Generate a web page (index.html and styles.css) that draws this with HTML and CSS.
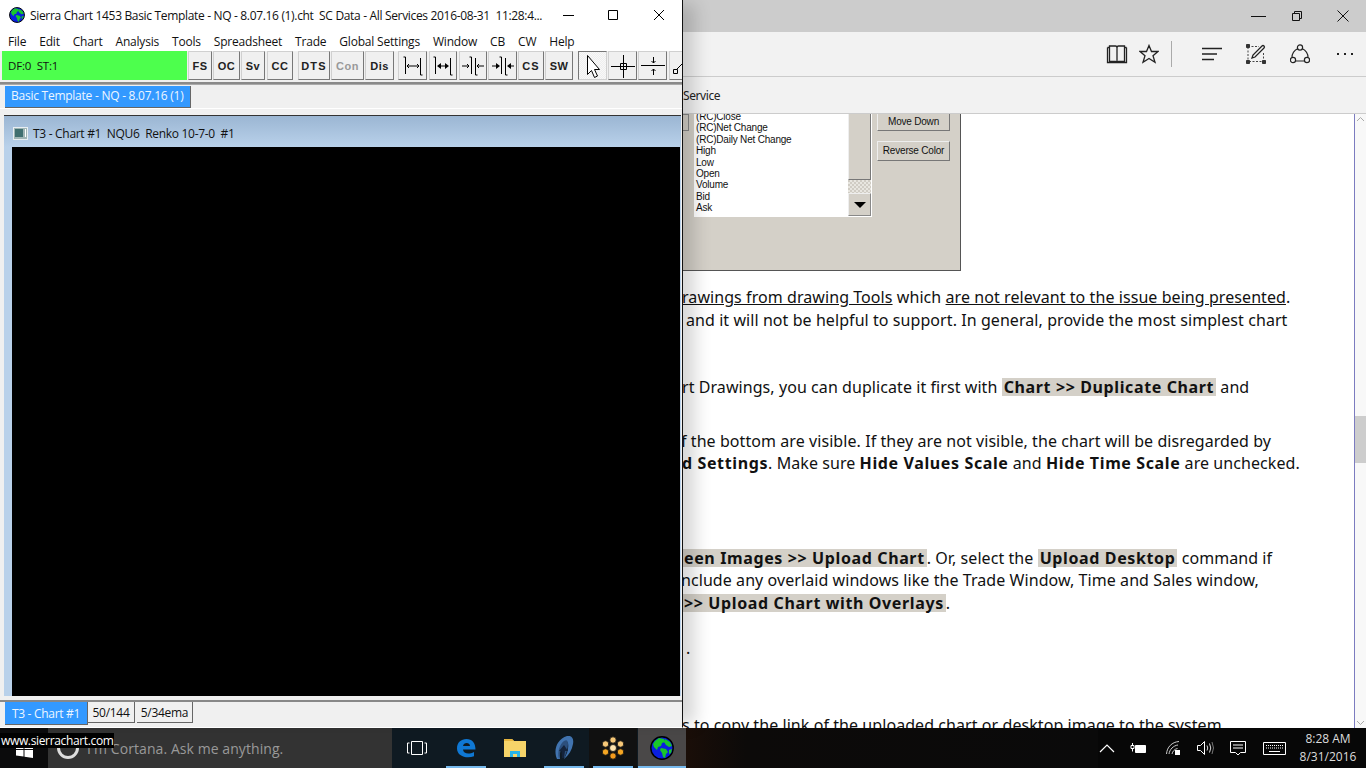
FILE: index.html
```html
<!DOCTYPE html>
<html lang="en">
<head>
<meta charset="utf-8">
<title>Sierra Chart</title>
<link rel="stylesheet" href="styles.css">
</head>
<body>
<svg class="defs" width="0" height="0">
  <symbol id="globe" viewBox="0 0 24 24">
    <circle cx="12" cy="12" r="11.2" fill="#0a1fe0" stroke="#000" stroke-width="1.4"/>
    <path d="M5 5l4-3 5 1 1 3-3 1-1 3-3 1-1 3-3-3-1-3z" fill="#19c72a"/>
    <path d="M15 3l5 3 2 4-3 1-3-2-2-3z" fill="#19c72a"/>
    <path d="M11 12l5 1 2 3-2 2-1 4-2-1-1-4-2-3z" fill="#19c72a"/>
    <path d="M19 14l3-1-1 4-2 1z" fill="#19c72a"/>
  </symbol>
</svg>

<div class="browser">
  <div class="b-title">
    <svg class="wc wc-min" width="16" height="16" viewBox="0 0 16 16"><path d="M1 8.500h15" stroke="#111"/></svg>
    <svg class="wc wc-res" width="16" height="16" viewBox="0 0 16 16"><path d="M3.500 5.500h7v7h-7zM5.500 5.500v-2h7v7h-2" fill="none" stroke="#111"/></svg>
    <svg class="wc wc-close" width="16" height="16" viewBox="0 0 16 16"><path d="M2.500 2.500l11 11M13.500 2.500l-11 11" stroke="#111"/></svg>
  </div>
  <div class="b-tools">
    <svg class="bi bi-book" width="22" height="20" viewBox="0 0 22 20"><path d="M1.500 3.500h2v14h6q1.500 0 1.500 1.500v-15q0-2-1.500-2h-6v1.500M20.500 3.500h-2v14h-6q-1.500 0-1.500 1.500M11 4q0-2 1.500-2h6v1.500M1.500 3.500v15h19v-15" fill="none" stroke="#222" stroke-width="1.300"/></svg>
    <svg class="bi bi-star" width="20" height="20" viewBox="0 0 20 20"><path d="M10 1.500l2.500 6h6.500l-5 4.200 2 6.500-6-3.800-6 3.800 2-6.500-5-4.200h6.500z" fill="none" stroke="#222" stroke-width="1.300"/></svg>
    <span class="bi-sep"></span>
    <svg class="bi bi-hub" width="20" height="14" viewBox="0 0 20 14"><path d="M0 1.500h20M0 7h15M0 12.500h12" stroke="#222" stroke-width="1.300"/></svg>
    <svg class="bi bi-note" width="20" height="20" viewBox="0 0 20 20"><path d="M2 2.500h11M17.500 9v9M2 3v15M3 17.500h14" stroke="#444" stroke-dasharray="2 1.500" fill="none"/><path d="M0.500 0.500h3v3h-3zM0.500 16.500h3v3h-3zM16.500 16.500h3v3h-3z" fill="#333" stroke="#333"/><path d="M6 14l1-3 9-9q1-1 2 0t0 2l-9 9z" fill="none" stroke="#222" stroke-width="1.300"/></svg>
    <svg class="bi bi-share" width="20" height="20" viewBox="0 0 20 20"><circle cx="10" cy="3.500" r="2.600" fill="none" stroke="#222" stroke-width="1.200"/><circle cx="3" cy="16" r="2.600" fill="none" stroke="#222" stroke-width="1.200"/><circle cx="17" cy="16" r="2.600" fill="none" stroke="#222" stroke-width="1.200"/><path d="M5.800 17h8.400M2 13.500q0-6 6-9M18 13.500q0-6-6-9" fill="none" stroke="#222" stroke-width="1.200"/></svg>
    <svg class="bi bi-more" width="18" height="4" viewBox="0 0 18 4"><path d="M1 1h2v2H1zM8 1h2v2H8zM15 1h2v2h-2z" fill="#222"/></svg>
  </div>
  <div class="b-fav">Service</div>
  <div class="b-body">
    <div class="page">
      <div class="dlg">
        <div class="dlg-left"><span class="dlg-stub"></span></div>
        <div class="listbox">
          <div class="items">
            <div>(RC)Close</div><div>(RC)Net Change</div><div>(RC)Daily Net Change</div><div>High</div><div>Low</div><div>Open</div><div>Volume</div><div>Bid</div><div>Ask</div>
          </div>
          <div class="lb-scroll">
            <span class="lb-thumb"></span>
            <span class="lb-check"></span>
            <span class="lb-down"><svg width="12" height="6" viewBox="0 0 12 6"><path d="M0 0h12L6 6z" fill="#000"/></svg></span>
          </div>
        </div>
        <div class="dlg-btns">
          <span class="dlg-btn dlg-btn-move">Move Down</span>
          <span class="dlg-btn dlg-btn-rev">Reverse Color</span>
        </div>
      </div>
      <p class="p1"><span class="i1"><u>rawings from drawing Tools</u> which <u>are not relevant to the issue being presented</u>.</span><br><span class="i2">and it will not be helpful to support. In general, provide the most simplest chart</span></p>
      <p class="p2"><span class="i1">rt Drawings, you can duplicate it first with <b class="hl">Chart &gt;&gt; Duplicate Chart</b> and</span></p>
      <p class="p3"><span class="i3">f the bottom are visible. If they are not visible, the chart will be disregarded by</span><br><span class="i1"><b>d Settings</b>. Make sure <b>Hide Values Scale</b> and <b>Hide Time Scale</b> are unchecked.</span></p>
      <p class="p4"><span class="i1"><b class="hl">een Images &gt;&gt; Upload Chart</b>. Or, select the <b class="hl">Upload Desktop</b> command if</span><br><span class="i3">nclude any overlaid windows like the Trade Window, Time and Sales window,</span><br><span class="i1"><b class="hl">&gt;&gt; Upload Chart with Overlays</b>.</span></p>
      <p class="p5"><span class="i2">.</span></p>
      <p class="p6"><span class="i1">s to copy the link of the uploaded chart or desktop image to the system</span></p>
    </div>
    <div class="vscroll">
      <svg class="vs-arrow" width="9" height="6" viewBox="0 0 9 6"><path d="M1 5l3.500-3.500L8 5" fill="none" stroke="#aaa"/></svg>
      <span class="vs-thumb"></span>
      <svg class="vs-arrow" width="9" height="6" viewBox="0 0 9 6"><path d="M1 1l3.500 3.500L8 1" fill="none" stroke="#aaa"/></svg>
    </div>
  </div>
</div>

<div class="taskbar">
  <div class="start">
    <svg width="17" height="17" viewBox="0 0 17 17"><path d="M0 2.500l7.500-1v6.500H0zM8.500 1.300L17 0v8H8.500zM0 9h7.500v6.500L0 14.500zM8.500 9H17v8l-8.500-1.200z" fill="#fff"/></svg>
  </div>
  <div class="cortana">
    <span class="c-ring"></span>
    <span class="c-text">I'm Cortana. Ask me anything.</span>
  </div>
  <div class="apps">
    <span class="app app-view"><svg width="20" height="14" viewBox="0 0 20 14"><path d="M4.500 0.500h11v13h-11zM2.500 2H0.500v10h2M17.500 2h2v10h-2" fill="none" stroke="#fff"/></svg></span>
    <span class="app app-on"><svg width="20" height="20" viewBox="0 0 20 20"><path d="M1 10.500C1 4.500 5 1 10.500 1 16 1 19.500 5 19.500 11.500H7c.3 4 5.500 5.500 11 2.500v4.200C11 21 1 18.500 1 10.500zM7 8h7c0-4-6.500-4-7 0z" fill="#0f78d4"/></svg></span>
    <span class="app"><svg width="22" height="20" viewBox="0 0 22 20"><path d="M0 1h8l2 2h12v16H0z" fill="#f6d469"/><path d="M0 1h8l2 2H0z" fill="#e6b53f"/><path d="M6 19v-6h10v6h-3v-3H9v3z" fill="#27b4e8"/></svg></span>
    <span class="app app-on"><svg width="20" height="24" viewBox="0 0 20 24"><path d="M3 23C-1 14 3 3 13 0c5-1 7 3 6 8-1 6-4 11-9 15 3-5 5-10 4-16-1-2-3-1-5 2-3 4-4 9-3 14z" fill="#4174b0"/><path d="M5 23C3 15 6 8 10 5c3-2 4 0 4 3 0 5-2 10-4 15l-.5-9-3 1z" fill="#2c4f7c"/><path d="M5 15l5-6 4 6h-3l-1 7H8l-.5-7z" fill="#14233a"/></svg></span>
    <span class="app app-on app-dark"><svg width="22" height="24" viewBox="0 0 22 24"><g stroke="#111" stroke-width=".8"><circle cx="11" cy="4" r="3.200" fill="#f7c878"/><circle cx="11" cy="20" r="3.200" fill="#f39a1c"/><circle cx="3.500" cy="8" r="3.200" fill="#f7c878"/><circle cx="18.500" cy="8" r="3.200" fill="#f7c878"/><circle cx="3.500" cy="16" r="3.200" fill="#f5a623"/><circle cx="18.500" cy="16" r="3.200" fill="#f5a623"/></g><circle cx="11" cy="12" r="3.500" fill="#ffe3ad" stroke="#111" stroke-width=".8"/></svg></span>
    <span class="app app-on app-act"><svg width="24" height="24"><use href="#globe"/></svg></span>
  </div>
  <div class="wall"></div>
  <div class="tray">
    <svg class="t-caret" width="16" height="9" viewBox="0 0 16 9"><path d="M1 8l7-7 7 7" fill="none" stroke="#fff" stroke-width="1.200"/></svg>
    <svg class="t-batt" width="17" height="11" viewBox="0 0 17 11"><path d="M5.500 2.500h10v7h-10z" fill="#fff" stroke="#fff"/><path d="M1 2.500h3v3H1zM2.500 0v2M2.500 5.500v3" stroke="#fff" fill="none"/></svg>
    <svg class="t-wifi" width="14" height="14" viewBox="0 0 14 14"><path d="M0.500 13C1 6 6 1 13 0.500M3 13c.5-4.500 4.500-8.500 9-9M6 13c.5-2.500 2.500-5 5.500-5.500" fill="none" stroke="#ccc"/><path d="M9 9h5v5H9z" fill="#fff"/></svg>
    <svg class="t-vol" width="17" height="14" viewBox="0 0 17 14"><path d="M0.500 4.500h3l4-4v13l-4-4h-3z" fill="none" stroke="#fff"/><path d="M10 4.500q1.500 2.500 0 5M12.500 2.500q2.500 4.500 0 9" fill="none" stroke="#ddd"/><path d="M15 1q3 6 0 12" fill="none" stroke="#777"/></svg>
    <svg class="t-note" width="16" height="15" viewBox="0 0 16 15"><path d="M0.500 0.500h15v11h-5l-2.500 2.500-2.500-2.500h-5zM3 4h10M3 7h10" fill="none" stroke="#fff"/></svg>
    <svg class="t-key" width="23" height="13" viewBox="0 0 23 13"><path d="M0.500 0.500h22v12h-22z" fill="none" stroke="#fff"/><path d="M3 3.500h17M3 6h17" stroke="#fff" stroke-dasharray="1 1"/><path d="M6 9.500h11" stroke="#fff"/></svg>
    <div class="clock"><div>8:28 AM</div><div>8/31/2016</div></div>
  </div>
</div>

<div class="sierra">
  <div class="s-title">
    <svg class="s-globe" width="16" height="16"><use href="#globe"/></svg>
    <span class="s-title-text">Sierra Chart 1453 Basic Template - NQ - 8.07.16 (1).cht&nbsp; SC Data - All Services 2016-08-31&nbsp; 11:28:4...</span>
    <svg class="s-min" width="12" height="12" viewBox="0 0 12 12"><path d="M0 6.500h11" stroke="#000"/></svg>
    <svg class="s-max" width="12" height="12" viewBox="0 0 12 12"><path d="M1.500 1.500h9v9h-9z" fill="none" stroke="#000"/></svg>
    <svg class="s-close" width="12" height="12" viewBox="0 0 12 12"><path d="M1 1l10 10M11 1L1 11" stroke="#000"/></svg>
  </div>
  <div class="s-menu">
    <span>File</span><span>Edit</span><span>Chart</span><span>Analysis</span><span>Tools</span><span>Spreadsheet</span><span>Trade</span><span>Global Settings</span><span>Window</span><span>CB</span><span>CW</span><span>Help</span>
  </div>
  <div class="s-tools">
    <div class="status">DF:0&nbsp; ST:1</div>
    <span class="tb w24 ml1">FS</span>
    <span class="tb w27 ml1">OC</span>
    <span class="tb w24 ml1">Sv</span>
    <span class="tb w26 ml2">CC</span>
    <span class="tb w32 ml5 tb-wide">DTS</span>
    <span class="tb w33 ml1 tb-off">Con</span>
    <span class="tb w29 ml1">Dis</span>
    <span class="tb w29 ml4"><svg width="26" height="24" viewBox="0 0 26 24"><path d="M5.500 3v17M20.500 4v17M3.500 3h2M20.500 21h2M7 12h12M9 10l-2 2 2 2M17 10l2 2-2 2" fill="none" stroke="#000"/></svg></span>
    <span class="tb w28 ml2"><svg width="26" height="24" viewBox="0 0 26 24"><path d="M5.500 3v17M20.500 4v17M3.500 3h2M20.500 21h2M9 12h8" fill="none" stroke="#000"/><path d="M7 12l4-3v6zM19 12l-4-3v6z"/></svg></span>
    <span class="tb w28 ml2"><svg width="26" height="24" viewBox="0 0 26 24"><path d="M11.500 3v17M15.500 4v17M9.500 3h2M15.500 21h2M2 12h7M7 10l2 2-2 2M24 12h-7M19 10l-2 2 2 2" fill="none" stroke="#000"/></svg></span>
    <span class="tb w29 ml1"><svg width="26" height="24" viewBox="0 0 26 24"><path d="M11.500 3v17M15.500 4v17M9.500 3h2M15.500 21h2M2 12h5M24 12h-5" fill="none" stroke="#000"/><path d="M10 12l-4-3v6zM17 12l4-3v6z"/></svg></span>
    <span class="tb w26 ml1 tb-wide">CS</span>
    <span class="tb w28 ml1">SW</span>
    <span class="tb w29 ml5 tb-on"><svg width="18" height="26" viewBox="0 0 18 26"><path d="M3.500 2.500v19l4-4 3 7 3-1.500-3-6.500h5z" fill="#fff" stroke="#000"/></svg></span>
    <span class="tb w29 ml1"><svg width="26" height="24" viewBox="0 0 26 24"><path d="M1 12.500h24M13.500 1v23" stroke="#000"/><path d="M10.500 9.500h6v6h-6z" fill="none" stroke="#000"/></svg></span>
    <span class="tb w29 ml1"><svg width="26" height="24" viewBox="0 0 26 24"><path d="M1 11.500h24M13.500 3v6M13.500 15v6M11.500 7l2 2 2-2M11.500 17l2-2 2 2" fill="none" stroke="#000"/></svg></span>
    <span class="tb w14 ml2 tb-clip"><svg width="13" height="24" viewBox="0 0 13 24"><path d="M3.500 15.500h4v4h-4zM7 15l6-6" fill="none" stroke="#000"/></svg></span>
  </div>
  <div class="s-sep"></div>
  <div class="s-tabs">
    <span class="s-tab">Basic Template - NQ - 8.07.16 (1)</span>
  </div>
  <div class="s-mdi">
    <div class="child">
      <div class="child-title">
        <svg width="15" height="13" viewBox="0 0 15 13"><path d="M0 0h15v13H0z" fill="#e8eef2"/><path d="M1 1h13v11H1z" fill="#9fb5b5"/><path d="M2 2h8v8H2z" fill="#3f6f70"/><path d="M12 2h1v8h-1z" fill="#fff"/></svg>
        <span>T3 - Chart #1&nbsp; NQU6&nbsp; Renko 10-7-0&nbsp; #1</span>
      </div>
      <div class="chart"></div>
    </div>
  </div>
  <div class="s-bottom">
    <span class="bt bt-on">T3 - Chart #1</span>
    <span class="bt bt-a">50/144</span>
    <span class="bt bt-b">5/34ema</span>
  </div>
</div>

<div class="tooltip">www.sierrachart.com</div>
</body>
</html>
```
FILE: styles.css
```css
* { box-sizing: border-box; }
html, body { margin: 0; padding: 0; }
body {
  width: 1366px; height: 768px; overflow: hidden; position: relative;
  display: flex; flex-direction: column; background: #fff;
  font-family: "Open Sans", "Noto Sans", sans-serif; color: #000;
}
.defs { position: absolute; }

/* browser window */
.browser { height: 728px; display: flex; flex-direction: column; flex: none; }
.b-title { height: 32px; background: #ccc; display: flex; justify-content: flex-end; align-items: center; padding-right: 15px; }
.b-title .wc { display: block; }
.wc-res { margin-left: 23px; }
.wc-close { margin-left: 30px; }
.b-tools { height: 45px; background: #f2f2f2; border-bottom: 1px solid #ccc; position: relative; display: flex; align-items: center; padding-left: 1106px; }
.bi { flex: none; display: block; }
.bi-star { margin-left: 11px; }
.bi-sep { width: 1px; height: 26px; background: #aaa; margin-left: 12px; }
.bi-hub { margin-left: 30px; }
.bi-note { margin-left: 24px; }
.bi-share { margin-left: 24px; }
.bi-more { margin-left: 26px; }
.b-fav { height: 37px; background: #f2f2f2; border-bottom: 1px solid #ccc; padding-left: 683px; font: 12px/37px "Noto Sans", sans-serif; color: #222; letter-spacing: -0.4px; }
.b-body { flex: 1; min-height: 0; display: flex; }
.page { flex: 1; min-width: 0; overflow: hidden; font: 16px/22.500px "Noto Sans", sans-serif; color: #111; white-space: nowrap; letter-spacing: 0.07px; }
.page p { margin: 0; }
.page b { letter-spacing: 0.62px; }
.p1 { padding-top: 15px; }
.p2 { margin-top: 45px !important; }
.p3 { margin-top: 31px !important; }
.p4 { margin-top: 72px !important; }
.p5 { margin-top: 23px !important; }
.p6 { margin-top: 54px !important; }
.i1 { margin-left: 682px; }
.i2 { margin-left: 686px; }
.i3 { margin-left: 681px; }
.hl { background: #d4d0c8; display: inline-block; line-height: 18px; padding: 0 2px; }

/* dialog image in the page */
.dlg { width: 961px; height: 157px; background: #d4d0c8; border-right: 1px solid #555; border-bottom: 1px solid #555; display: flex; align-items: flex-start; font: 10px/11.400px "Liberation Sans", sans-serif; color: #111; letter-spacing: -0.2px; }
.dlg-left { width: 694px; flex: none; }
.dlg-stub { display: block; width: 7px; height: 17px; background: #d4d0c8; border: 1px solid #888; margin-left: 682px; }
.listbox { width: 178px; height: 103px; background: #fff; border-right: 1px solid #fff; border-bottom: 1px solid #fff; display: flex; overflow: hidden; flex: none; }
.items { flex: 1; padding-left: 2px; margin-top: -3px; }
.lb-scroll { width: 23px; display: flex; flex-direction: column; flex: none; }
.lb-thumb { height: 66px; background: #d4d0c8; border-left: 1px solid #eee; border-right: 1px solid #777; border-bottom: 1px solid #777; }
.lb-check { height: 13px; background: repeating-conic-gradient(#e8e6e0 0 25%, #d0ccc4 0 50%) 0 0 / 4px 4px; }
.lb-down { flex: 1; background: #d4d0c8; border: 1px solid #888; border-top-color: #eee; border-left-color: #eee; display: flex; align-items: center; justify-content: center; }
.dlg-btns { display: flex; flex-direction: column; margin-left: 5px; flex: none; }
.dlg-btn { width: 73px; background: #d4d0c8; border: 1px solid #777; border-top-color: #eee; border-left-color: #eee; display: flex; align-items: center; justify-content: center; white-space: nowrap; }
.dlg-btn-move { height: 18px; margin-top: -1px; }
.dlg-btn-rev { height: 20px; margin-top: 10px; }

.vscroll { width: 12px; flex: none; border-left: 1px solid #7c7cc0; background: #f8f8f8; display: flex; flex-direction: column; align-items: center; padding-top: 2px; position: relative; }
.vs-thumb { width: 11px; height: 47px; background: #cdcdcd; margin-top: 294px; margin-bottom: 257px; }
.vs-arrow { display: block; }

/* taskbar */
.taskbar { height: 40px; flex: none; display: flex; background: #0b0b0c; color: #fff; }
.start { width: 48px; display: flex; align-items: center; justify-content: center; flex: none; padding-top: 2px; }
.cortana { width: 344px; flex: none; background: #333; display: flex; align-items: center; padding-left: 9px; }
.c-ring { width: 22px; height: 22px; border: 3px solid #ddd; border-radius: 50%; flex: none; }
.c-text { margin-left: 8px; font: 14px "Open Sans", sans-serif; color: #999; white-space: nowrap; letter-spacing: 0.07px; }
.apps { display: flex; flex: none; background: #0f1a22; }
.app { width: 48px; height: 40px; display: flex; align-items: center; justify-content: center; flex: none; margin-right: 1px; }
.app:last-child { margin-right: 0; }
.app-on { background: linear-gradient(#76b9ed, #76b9ed) center bottom / 40px 2px no-repeat; }
.app-view { width: 49px; }
.app-dark { background-color: #111; }
.app-act { background: #4a4848 linear-gradient(#76b9ed, #76b9ed) center bottom / 100% 2px no-repeat; }
.wall { flex: 1; background: linear-gradient(90deg, #1a0e08 0, #0c0a09 60px, #0a0a0a 100%); }
.tray { display: flex; align-items: center; flex: none; width: 268px; background: #070707; padding-left: 1px; }
.tray svg { flex: none; display: block; }
.t-batt { margin-left: 15px; }
.t-wifi { margin-left: 19px; }
.t-vol { margin-left: 17px; }
.t-note { margin-left: 16px; }
.t-key { margin-left: 17px; }
.clock { margin-left: 12px; width: 60px; text-align: center; font: 12px/18px "Open Sans", sans-serif; color: #ddd; white-space: nowrap; }

/* sierra chart window */
.sierra { position: absolute; left: 0; top: 0; width: 683px; height: 728px; background: #f0f0f0; border-right: 1px solid #111; border-bottom: 1px solid #fff; box-shadow: 16px 0 16px -4px rgba(0,0,0,.16); display: flex; flex-direction: column; }
.s-title { height: 30px; background: #fff; display: flex; align-items: center; padding-left: 9px; flex: none; font: 12px "Open Sans", sans-serif; color: #111; }
.s-globe { flex: none; }
.s-title-text { margin-left: 5px; width: 514px; white-space: nowrap; letter-spacing: -0.33px; flex: none; }
.s-min { margin-left: 19px; flex: none; }
.s-max { margin-left: 32px; flex: none; }
.s-close { margin-left: 34px; flex: none; }
.s-menu { height: 21px; background: #fff; display: flex; align-items: center; padding: 1px 0 0 8px; gap: 13px; flex: none; font: 12px "Open Sans", sans-serif; color: #111; letter-spacing: -0.2px; }
.s-tools { height: 31px; flex: none; background: #f0f0f0; display: flex; align-items: stretch; padding: 0 0 2px 2px; overflow: hidden; font: bold 11px "Liberation Sans", sans-serif; }
.status { width: 185px; background: #4dff4d; flex: none; font: 11.500px/30px "Open Sans", sans-serif; padding-left: 6px; color: #111; letter-spacing: -0.2px; }
.tb { flex: none; background: #f0f0f0; border: 1px solid; border-color: #d0d0d0 #777 #777 #d0d0d0; display: flex; align-items: center; justify-content: center; letter-spacing: 0.5px; color: #222; }
.tb svg { display: block; flex: none; }
.tb-off { color: #999; }
.tb-wide { letter-spacing: 1.200px; }
.tb-on { background: repeating-conic-gradient(#f8f8f8 0 25%, #eee 0 50%) 0 0 / 2px 2px; border-color: #777 #d0d0d0 #d0d0d0 #777; }
.tb-clip { justify-content: flex-start; border-right: 0; }
.w14 { width: 14px; } .w24 { width: 24px; } .w26 { width: 26px; } .w27 { width: 27px; } .w28 { width: 28px; } .w29 { width: 29px; } .w32 { width: 32px; } .w33 { width: 33px; }
.ml1 { margin-left: 1px; } .ml2 { margin-left: 2px; } .ml4 { margin-left: 4px; } .ml5 { margin-left: 5px; }
.s-sep { height: 3px; flex: none; background: #8a8a8a; border-bottom: 1px solid #aaa; }
.s-tabs { height: 24px; flex: none; padding: 1px 0 0 5px; background: #f0f0f0; border-bottom: 1px solid #fff; }
.s-tab { display: block; width: 186px; height: 22px; background: #3399ff; color: #eef6ff; border-right: 1px solid #666; border-bottom: 1px solid #666; font: 12px/20px "Open Sans", sans-serif; padding-left: 6px; white-space: nowrap; letter-spacing: -0.25px; }
.s-mdi { flex: 1; min-height: 0; background: #f0f0f0; padding: 6px 0 4px; border-bottom: 2px solid #888; display: flex; flex-direction: column; }
.child { flex: 1; min-height: 0; border-top: 1px solid #333; margin: 0 1px 0 4px; background: #b9d1ea; padding: 0 1px 0 8px; display: flex; flex-direction: column; }
.child-title { height: 31px; flex: none; margin: 0 -1px 0 -8px; padding: 4px 0 0 9px; display: flex; align-items: center; gap: 5px; background: linear-gradient(#9bb6d3, #b9d1ea); font: 12px "Open Sans", sans-serif; color: #111; white-space: nowrap; letter-spacing: -0.3px; }
.chart { flex: 1; background: #000; }
.s-bottom { height: 25px; flex: none; background: #f0f0f0; display: flex; align-items: flex-start; padding: 0 0 0 5px; font: 12px/21px "Open Sans", sans-serif; color: #111; white-space: nowrap; letter-spacing: -0.3px; }
.bt { display: block; height: 21px; background: #f0f0f0; border-right: 1px solid #666; border-bottom: 1px solid #666; text-align: center; }
.bt-on { width: 83px; height: 23px; line-height: 23px; background: #3399ff; color: #eef6ff; }
.bt-a { width: 47px; }
.bt-b { width: 56px; margin-left: 2px; }

.tooltip { position: absolute; left: 0; top: 733px; width: 114px; height: 15px; background: #000; color: #fff; font: 12px/15px "Open Sans", sans-serif; white-space: nowrap; padding-left: 1px; letter-spacing: -0.35px; }
```
